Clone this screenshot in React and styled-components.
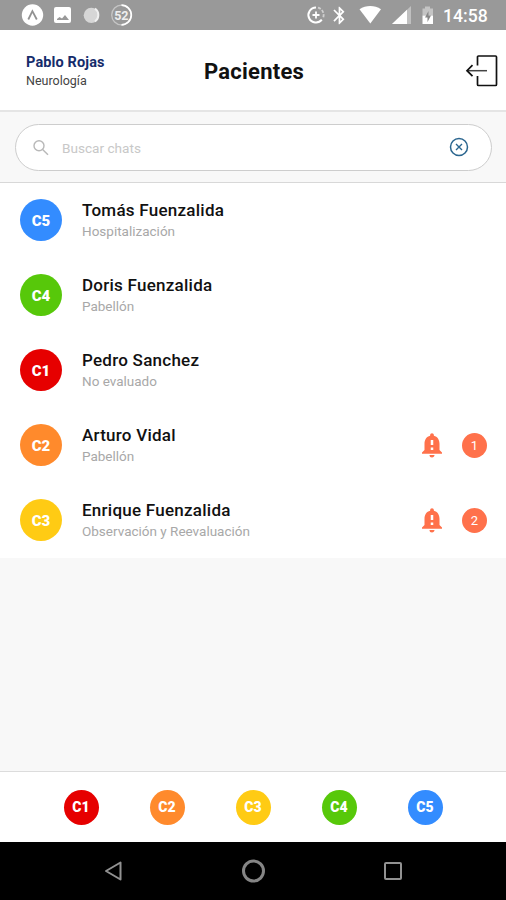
import React from 'react'
import styled, { createGlobalStyle } from 'styled-components'
import { MdNotificationImportant, MdBluetooth } from 'react-icons/md'

const GlobalStyle = createGlobalStyle`
  * {
    box-sizing: border-box;
  }
  body {
    margin: 0;
    background: #f8f8f8;
    font-family: Roboto, sans-serif;
  }
  svg {
    display: block;
    flex: none;
  }
`

const COLORS = {
  C1: '#e60000',
  C2: '#ff8a2c',
  C3: '#ffcb14',
  C4: '#57c80a',
  C5: '#338cff'
}

const Screen = styled.div`
  display: flex;
  flex-direction: column;
  width: 506px;
  height: 900px;
  overflow: hidden;
  background: #f8f8f8;
`

const StatusBar = styled.div`
  display: flex;
  flex: none;
  align-items: center;
  justify-content: space-between;
  height: 30px;
  padding: 0 18px 0 21px;
  background: #999;
  color: #fff;
`
const StatusGroup = styled.div`
  display: flex;
  align-items: center;
`
const BluetoothIcon = styled(MdBluetooth)`
  margin-left: 2px;
`
const Clock = styled.span`
  width: 45px;
  margin-left: 9px;
  padding-top: 2px;
  font-size: 17.6px;
  line-height: 20px;
  font-weight: 500;
  white-space: nowrap;
`

const Header = styled.header`
  display: grid;
  flex: none;
  grid-template-columns: 1fr auto 1fr;
  align-items: center;
  height: 82px;
  padding: 2px 8px 0 26px;
  background: #fff;
  border-bottom: 2px solid #e5e5e5;
`
const Doctor = styled.div`
  display: flex;
  flex-direction: column;
`
const DoctorName = styled.span`
  color: #152c6b;
  font-size: 14.5px;
  line-height: 19px;
  font-weight: 700;
  letter-spacing: 0.13px;
`
const Specialty = styled.span`
  color: #444;
  font-size: 12.5px;
  line-height: 18px;
`
const Title = styled.h1`
  margin: 0 16px 0 0;
  padding-top: 1px;
  color: #111;
  font-size: 22px;
  line-height: 28px;
  font-weight: 700;
  letter-spacing: 0.25px;
`
const IconButton = styled.button`
  display: flex;
  justify-self: end;
  padding: 0 0 ${props => props.$lift || 0}px;
  border: none;
  background: none;
  cursor: pointer;

  &:focus {
    outline: none;
  }
`

const SearchArea = styled.div`
  flex: none;
  height: 71px;
  padding: 12px 14px 0 15px;
  border-bottom: 1px solid #d8d8d8;
`
const SearchField = styled.div`
  display: flex;
  align-items: center;
  height: 47px;
  padding: 0 22px 0 15px;
  border: 1px solid #cdcdcd;
  border-radius: 24px;
  background: #fff;
`
const SearchInput = styled.input`
  flex: 1;
  min-width: 0;
  margin-left: 11px;
  padding: 0;
  border: none;
  outline: none;
  background: none;
  font-family: inherit;
  font-size: 13.6px;

  &::placeholder {
    color: #c8c8c8;
    opacity: 1;
  }
`

const List = styled.div`
  display: flex;
  flex: none;
  flex-direction: column;
  background: #fff;
`
const Row = styled.div`
  display: flex;
  align-items: center;
  height: 75px;
  padding: 0 19px 1px 20px;
`
const Category = styled.span`
  display: flex;
  flex: none;
  align-items: center;
  justify-content: center;
  width: ${props => props.$size}px;
  height: ${props => props.$size}px;
  padding-top: ${props => props.$size > 40 ? 2 : 0}px;
  border-radius: 50%;
  background: ${props => COLORS[props.$level]};
  color: #fff;
  font-size: ${props => props.$size > 40 ? 15 : 14}px;
  font-weight: 900;
`
const Patient = styled.div`
  display: flex;
  flex: 1;
  flex-direction: column;
  margin-left: 20px;
`
const PatientName = styled.span`
  color: #111;
  font-size: 17px;
  line-height: 21px;
  font-weight: 500;
  letter-spacing: 0.25px;
`
const PatientStatus = styled.span`
  color: #a8a8a8;
  font-size: 13.5px;
  line-height: 20px;
`
const Alerts = styled.div`
  display: flex;
  align-items: center;
  gap: 15px;
  color: #ff714b;
`
const AlertCount = styled.span`
  display: flex;
  align-items: center;
  justify-content: center;
  width: 25px;
  height: 25px;
  border-radius: 50%;
  background: #ff714b;
  color: #fff;
  font-size: 13px;
`

const Filters = styled.div`
  display: flex;
  flex: none;
  align-items: center;
  justify-content: center;
  gap: 51px;
  height: 71px;
  margin-top: auto;
  background: #fff;
  border-top: 1px solid #dcdcdc;
`
const NavBar = styled.nav`
  display: flex;
  flex: none;
  align-items: center;
  justify-content: space-between;
  height: 58px;
  padding: 0 102px;
  background: #000;
`

const patients = [
  { name: 'Tomás Fuenzalida', status: 'Hospitalización', level: 'C5' },
  { name: 'Doris Fuenzalida', status: 'Pabellón', level: 'C4' },
  { name: 'Pedro Sanchez', status: 'No evaluado', level: 'C1' },
  { name: 'Arturo Vidal', status: 'Pabellón', level: 'C2', alerts: 1 },
  { name: 'Enrique Fuenzalida', status: 'Observación y Reevaluación', level: 'C3', alerts: 2 }
]

const NotificationIcons = () => (
  <svg width="115" height="30" viewBox="0 0 115 30">
    <circle cx="11.5" cy="15" r="10.7" fill="#fff" />
    <path d="M7.3 19.5 11.4 11.2 15.8 19.5" fill="none" stroke="#929292" strokeWidth="1.8" />
    <rect x="33" y="7" width="17" height="16" rx="2" fill="#fff" />
    <path d="M36 20v-1l2.500-2 2.500 1.500 3-3.500 4 5z" fill="#999" />
    <circle cx="70.3" cy="15.3" r="7.6" fill="#d6d6d6" />
    <path d="M74 8.500a8 8 0 0 1 0 13" fill="none" stroke="#f0f0f0" strokeWidth="2" />
    <circle cx="100.5" cy="15" r="9.8" fill="none" stroke="#c5c5c5" strokeWidth="1.3" />
    <path d="M100.5 5.2a9.8 9.8 0 0 1 0 19.6" fill="none" stroke="#fff" strokeWidth="1.7" />
    <text x="100.3" y="19.5" fill="#eee" fontSize="12.5" fontWeight="700" textAnchor="middle">52</text>
  </svg>
)

const SystemIcons = () => (
  <StatusGroup>
    <svg width="22" height="30" viewBox="0 0 22 30">
      <path d="M11 7.5a7.5 7.5 0 1 0 5.8 12.2" fill="none" stroke="#fff" strokeWidth="2" />
      <path d="M13 7.7a7.5 7.5 0 0 1 5.2 9.8" fill="none" stroke="#d0d0d0" strokeWidth="1.8" strokeDasharray="3 1.5" />
      <path d="M11 11.5v7M7.5 15h7" stroke="#fff" strokeWidth="1.8" />
    </svg>
    <BluetoothIcon size={21} />
    <svg width="84" height="30" viewBox="0 0 84 30">
      <path d="M9.500 9.300C16 5 24.500 5 31 9.300L20.300 23.500z" fill="#fff" />
      <path d="M61 6v18H42z" fill="#c0c0c0" />
      <path d="M57 9.800V24H42z" fill="#fff" />
      <path d="M75 6.500h5v2h3v7H72.500v-7H75z" fill="#c4c4c4" />
      <path d="M72.500 15.500H83V24H72.500z" fill="#fff" />
      <path d="M78.500 11 75 17.500h2.500V22l3.500-6.500h-2.500z" fill="#888" />
    </svg>
    <Clock>14:58</Clock>
  </StatusGroup>
)

const PatientRow = ({ patient }) => (
  <Row>
    <Category $size={42} $level={patient.level}>{patient.level}</Category>
    <Patient>
      <PatientName>{patient.name}</PatientName>
      <PatientStatus>{patient.status}</PatientStatus>
    </Patient>
    {patient.alerts && (
      <Alerts>
        <MdNotificationImportant size={30} />
        <AlertCount>{patient.alerts}</AlertCount>
      </Alerts>
    )}
  </Row>
)

const App = () => (
  <Screen>
    <GlobalStyle />
    <StatusBar>
      <NotificationIcons />
      <SystemIcons />
    </StatusBar>
    <Header>
      <Doctor>
        <DoctorName>Pablo Rojas</DoctorName>
        <Specialty>Neurología</Specialty>
      </Doctor>
      <Title>Pacientes</Title>
      <IconButton type="button" aria-label="Salir" $lift={1}>
        <svg width="33" height="34" viewBox="0 0 33 34" fill="none" stroke="#111" strokeWidth="1.7">
          <path d="M12.500 11.500V3a1 1 0 0 1 1-1h17a1 1 0 0 1 1 1v27.500a1 1 0 0 1-1 1h-17a1 1 0 0 1-1-1V22" />
          <path d="M2 16.700h20" stroke="#444" strokeWidth="1.500" />
          <path d="M7.500 11.200 2 16.700l5.500 5.500" />
        </svg>
      </IconButton>
    </Header>
    <SearchArea>
      <SearchField>
        <svg width="20" height="20" viewBox="0 0 20 20" fill="none" stroke="#b8b8b8" strokeWidth="1.4">
          <circle cx="8" cy="7.8" r="5" />
          <path d="m11.600 11.400 5.400 5.400" />
        </svg>
        <SearchInput type="text" placeholder="Buscar chats" />
        <IconButton type="button" aria-label="Borrar" $lift={2}>
          <svg width="20" height="20" viewBox="0 0 20 20" fill="none" stroke="#2b668f">
            <circle cx="10" cy="10" r="8.500" strokeWidth="1.500" />
            <path d="m7 7 6 6m0-6-6 6" strokeWidth="1.400" />
          </svg>
        </IconButton>
      </SearchField>
    </SearchArea>
    <List>
      {patients.map(patient => <PatientRow key={patient.name} patient={patient} />)}
    </List>
    <Filters>
      {Object.keys(COLORS).map(level => (
        <Category key={level} $size={35} $level={level}>{level}</Category>
      ))}
    </Filters>
    <NavBar>
      <svg width="22" height="24" viewBox="0 0 22 24" fill="none" stroke="#929292" strokeWidth="2">
        <path d="M18.500 3.500v17L4 12z" strokeLinejoin="round" />
      </svg>
      <svg width="26" height="26" viewBox="0 0 26 26" fill="none" stroke="#858585" strokeWidth="3">
        <circle cx="13.5" cy="13" r="10" />
      </svg>
      <svg width="22" height="22" viewBox="0 0 22 22" fill="none" stroke="#929292" strokeWidth="2">
        <rect x="3" y="3" width="16" height="16" rx="1" />
      </svg>
    </NavBar>
  </Screen>
)

export default App
